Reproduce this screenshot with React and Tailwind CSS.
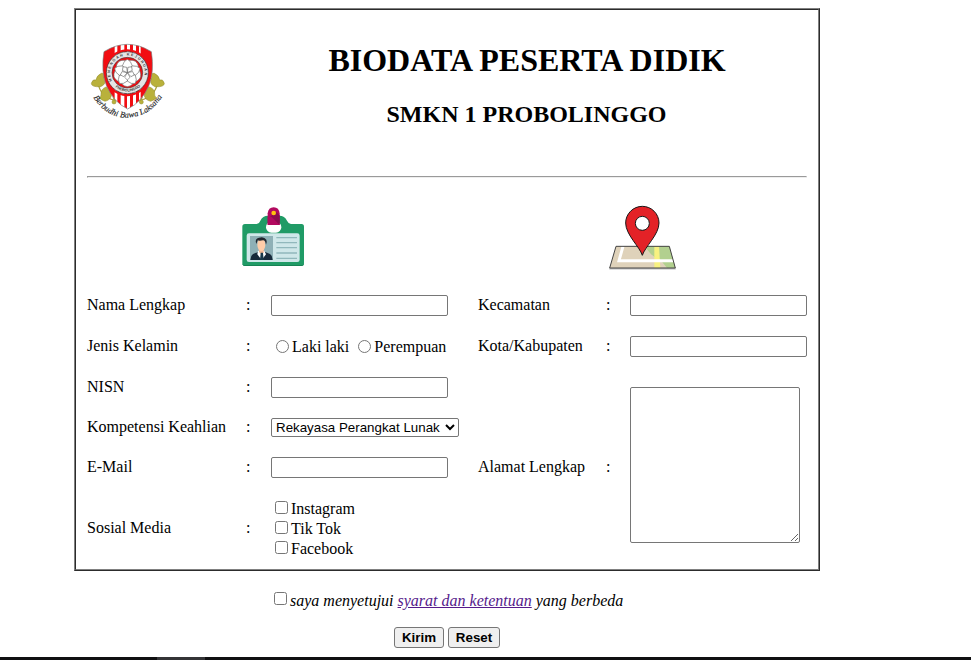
import React from "react";

const field = "block h-[21px] w-[177px] rounded-[2px] border border-[#767676] bg-white px-[2px] text-[13px] outline-none";

function SchoolCrest() {
  const petals = [0, 72, 144, 216, 288];
  return (
    <svg className="block h-20 w-20 overflow-visible" viewBox="54 126 240 240">
      <defs>
        <clipPath id="shield">
          <path d="M102 155 Q138 133 173 133 Q208 133 244 155 Q254 215 236 258 Q216 306 173 327 Q130 306 110 258 Q92 215 102 155Z" />
        </clipPath>
        <path id="ringTop" d="M126 243 A52 52 0 1 1 218 243" />
        <path id="ringBottom" d="M136 261 A56 56 0 0 0 212 258" />
        <path id="motto" d="M70 292 Q104 350 170 353 Q246 350 282 280" />
      </defs>
      <g fill="none" stroke="#aaa33b" strokeWidth="4">
        <path d="M82 240 Q90 300 150 303M265 240 Q256 300 194 303" />
      </g>
      <g fill="#b9b13b" stroke="#8f8929" strokeWidth="1.5">
        <path d="M94 220q12-2 8 12q10 20-10 28q-28 2-28-10q4-14 14-10q2-14 16-20z" />
        <path d="M253 220q-12-2-8 12q-10 20 10 28q28 2 28-10q-4-14-14-10q-2-14-16-20z" />
        <path d="M108 261q21 6 17 22q-2 17-20 21q-11-4-18-11q8-4 6-12q0-14 15-20z" />
        <path d="M239 261q-21 6-17 22q2 17 20 21q11-4 18-11q-8-4-6-12q0-14-15-20z" />
        <circle cx="138" cy="292" r="9" />
        <circle cx="208" cy="292" r="9" />
        <circle cx="132" cy="306" r="6" />
        <circle cx="214" cy="306" r="6" />
      </g>
      <g clipPath="url(#shield)">
        <rect x="92" y="130" width="162" height="200" fill="#fff" />
        <path fill="#f20d12" d="M92 130H134V170L120 200V240L134 270V330H92zM254 130H212V170L226 200V240L212 270V330H254zM142 130h10v200h-10zM163 130h8v200h-8zM180 130h9v200h-9zM198 130h9v200h-9z" />
        <circle cx="172" cy="218" r="67" fill="none" stroke="#f20d12" strokeWidth="7" />
      </g>
      <path d="M102 155 Q138 133 173 133 Q208 133 244 155 Q254 215 236 258 Q216 306 173 327 Q130 306 110 258 Q92 215 102 155Z" fill="none" stroke="#777" strokeWidth="2" />
      <circle cx="172" cy="218" r="63" fill="#e5e5e5" stroke="#333" strokeWidth="2" />
      <circle cx="172" cy="218" r="46" fill="#f20d12" stroke="#444" strokeWidth="2" />
      <g className="font-['Liberation_Sans'] text-[11px] font-bold" fill="#333">
        <text><textPath href="#ringTop" textLength="195">MENENGAH KEJURUAN</textPath></text>
        <text><textPath href="#ringBottom" textLength="82">PROBOLINGGO</textPath></text>
      </g>
      <g fill="#fff" stroke="#555" strokeWidth="1.6">
        {petals.map((a) => (
          <path key={a} transform={`rotate(${a + 36} 172 218)`} d="M172 218L151 196Q153 179 172 176Q191 179 193 196Z" />
        ))}
        {petals.map((a) => (
          <path key={a} transform={`rotate(${a} 172 218)`} d="M172 218L157 198Q161 182 172 178Q183 182 187 198Z" />
        ))}
        {petals.map((a) => (
          <path key={a} transform={`rotate(${a + 36} 172 218)`} d="M172 218L164 204L172 196L180 204Z" />
        ))}
      </g>
      <text className="font-['Liberation_Serif'] text-[25px] italic" fill="#222" stroke="#222" strokeWidth="0.4">
        <textPath href="#motto" textLength="252">Berbudhi Bawa Laksana</textPath>
      </text>
    </svg>
  );
}

function IdCard() {
  return (
    <svg className="block h-16 w-[66px]" viewBox="30 30 198 192">
      <path fill="#209b66" d="M45 87H80Q88 86 91 77Q98 62 114 62H148Q164 62 171 77Q175 86 183 87H215Q222 87 222 95V205Q222 213 214 213H45Q37 213 37 205V95Q37 87 45 87Z" />
      <path fill="#168354" d="M37 203Q37 210 45 210H214Q222 210 222 203V205Q222 213 214 213H45Q37 213 37 205Z" />
      <rect x="50" y="115" width="159" height="86" rx="7" fill="#cfe7e9" />
      <rect x="108" y="80" width="46" height="33" rx="16" fill="#fff" />
      <path fill="#b2095f" d="M113 90V55Q115 37 131 37Q147 37 149 55V90Z" />
      <path fill="#8c0a50" d="M120 66L149 90V61L138 51Z" />
      <path fill="#b2095f" d="M113 66H125L149 90H113Z" />
      <circle cx="131" cy="54" r="7" fill="#ffc20e" />
      <rect x="60" y="123" width="69" height="72" fill="#8eb0b6" />
      <path fill="#172a3b" d="M61 195Q61 176 79 173L95 166L111 173Q128 176 128 195Z" />
      <path fill="#fff" d="M84 167H103L108 178L95 195L82 178Z" />
      <path fill="#f0b895" d="M87 155H101V172L95 179L87 171Z" />
      <ellipse cx="94" cy="149" rx="12" ry="19" fill="#ffcda9" />
      <path fill="#21262e" d="M79 147Q73 131 87 128Q102 123 109 134Q112 141 108 149Q106 135 99 136Q88 138 83 136Z" />
      <path fill="#17384a" d="M92 173h7l2 22h-11z" />
      <path d="M139 128H201M139 143H201M139 158H201M139 174H201M139 190H201" stroke="#91b8bc" strokeWidth="4" />
    </svg>
  );
}

function MapPin() {
  return (
    <svg className="block h-[69px] w-[74px]" viewBox="18 24 222 207">
      <path d="M28 221H227" stroke="#bbb" strokeWidth="5" />
      <path fill="#dfd2ba" d="M48 154H208L226 219H29Z" />
      <path fill="#b2d08f" d="M134 154H208L226 219H201L180 193Q160 187 150 174Z" />
      <path fill="#f7f180" d="M163 154H177L181 219H163Z" />
      <path d="M69 154L57 197H220" fill="none" stroke="#fff" strokeWidth="9" />
      <path d="M48 154H208L226 219H29Z" fill="none" stroke="#444" strokeWidth="3" />
      <path d="M127 181C119 155 77 119 77 84A50 50 0 0 1 177 84C177 119 135 155 127 181Z" fill="#e32227" stroke="#181818" strokeWidth="3" />
      <circle cx="127" cy="85" r="21" fill="#fff" stroke="#181818" strokeWidth="3" />
    </svg>
  );
}

function Row({ label, height, wide, raised, children }) {
  const shift = raised ? "pb-[2px]" : "";
  return (
    <div className={`flex items-center ${height}`}>
      <div className={`${shift} ${wide ? "w-[159px]" : "w-32"}`}>{label}</div>
      <div className={`${shift} ${wide ? "w-[25px]" : "w-6"}`}>:</div>
      {children}
    </div>
  );
}

export default function App() {
  return (
    <div className="flex h-[660px] w-[971px] flex-col overflow-hidden bg-white pt-2 font-['Liberation_Serif','Times_New_Roman',serif] text-base leading-5 text-black">
      <div className="ml-[74px] h-[563px] w-[746px] border border-t-[#808080] border-r-[#2c2c2c] border-b-[#2c2c2c] border-l-[#808080]">
        <div className="h-full border border-t-[#2c2c2c] border-r-[#808080] border-b-[#808080] border-l-[#2c2c2c] px-[11px]">
          <header className="flex h-[166px] pt-8">
            <div className="ml-px w-[158px]">
              <SchoolCrest />
            </div>
            <div className="w-[561px] text-center font-bold">
              <h1 className="ml-px text-[32px] leading-[37px]">BIODATA PESERTA DIDIK</h1>
              <h2 className="mt-[21px] text-2xl leading-7">SMKN 1 PROBOLINGGO</h2>
            </div>
          </header>
          <hr className="h-[2px] border border-t-[#9a9a9a] border-r-[#eee] border-b-[#eee] border-l-[#9a9a9a]" />
          <div className="flex">
            <section className="w-[391px]">
              <div className="h-[107px] pt-[27px] pl-[153px]">
                <IdCard />
              </div>
              <Row label="Nama Lengkap" height="h-[41px]" wide raised>
                <input className={field} />
              </Row>
              <Row label="Jenis Kelamin" height="h-[41px]" wide raised>
                <label className="ml-[5px] flex items-center">
                  <input type="radio" name="gender" className="mr-[3px] h-[13px] w-[13px]" />
                  <span className="pt-px">Laki laki</span>
                </label>
                <label className="ml-[9px] flex items-center">
                  <input type="radio" name="gender" className="mr-[3px] h-[13px] w-[13px]" />
                  <span className="pt-px">Perempuan</span>
                </label>
              </Row>
              <Row label="NISN" height="h-10" wide>
                <input className={field} />
              </Row>
              <Row label="Kompetensi Keahlian" height="h-10" wide>
                <select className="h-[19px] w-[188px] rounded-[2px] border border-[#767676] bg-white font-['Liberation_Sans',Arial,sans-serif] text-[13.333px] leading-[17px]">
                  <option>Rekayasa Perangkat Lunak</option>
                </select>
              </Row>
              <Row label="E-Mail" height="h-10" wide>
                <input className={field} />
              </Row>
              <Row label="Sosial Media" height="h-[82px]" wide>
                <div className="pt-[2px] pl-1">
                  {["Instagram", "Tik Tok", "Facebook"].map((name) => (
                    <label key={name} className="flex h-5 items-start">
                      <input type="checkbox" className="mt-[2px] mr-[3px] h-[13px] w-[13px]" />
                      <span>{name}</span>
                    </label>
                  ))}
                </div>
              </Row>
            </section>
            <section className="w-[329px]">
              <div className="h-[107px] pt-[25px] pl-32">
                <MapPin />
              </div>
              <Row label="Kecamatan" height="h-[41px]" raised>
                <input className={field} />
              </Row>
              <Row label="Kota/Kabupaten" height="h-[41px]" raised>
                <input className={field} />
              </Row>
              <Row label="Alamat Lengkap" height="h-[200px]">
                <textarea className="mb-1 h-[156px] w-[170px] rounded-[2px] border border-[#767676] bg-white outline-none" />
              </Row>
            </section>
          </div>
        </div>
      </div>
      <div className="mt-[19px] ml-[274px] flex h-5 items-start italic">
        <input type="checkbox" className="mt-[2px] mr-[3px] h-[13px] w-[13px]" />
        <span className="pt-px whitespace-pre">
          saya menyetujui <a className="text-[#551a8b] underline">syarat dan ketentuan</a> yang berbeda
        </span>
      </div>
      <div className="mt-[17px] ml-[394px] flex gap-1 font-['Liberation_Sans',Arial,sans-serif] text-[13.333px] leading-[15px] font-bold">
        <button className="h-[21px] w-[50px] rounded-[3px] border border-[#767676] bg-[#efefef]">Kirim</button>
        <button className="h-[21px] w-[52px] rounded-[3px] border border-[#767676] bg-[#efefef]">Reset</button>
      </div>
      <div className="mt-auto h-[3px] shrink-0 bg-[#101012] pl-[157px]">
        <div className="h-full w-12 bg-[#343436]" />
      </div>
    </div>
  );
}
